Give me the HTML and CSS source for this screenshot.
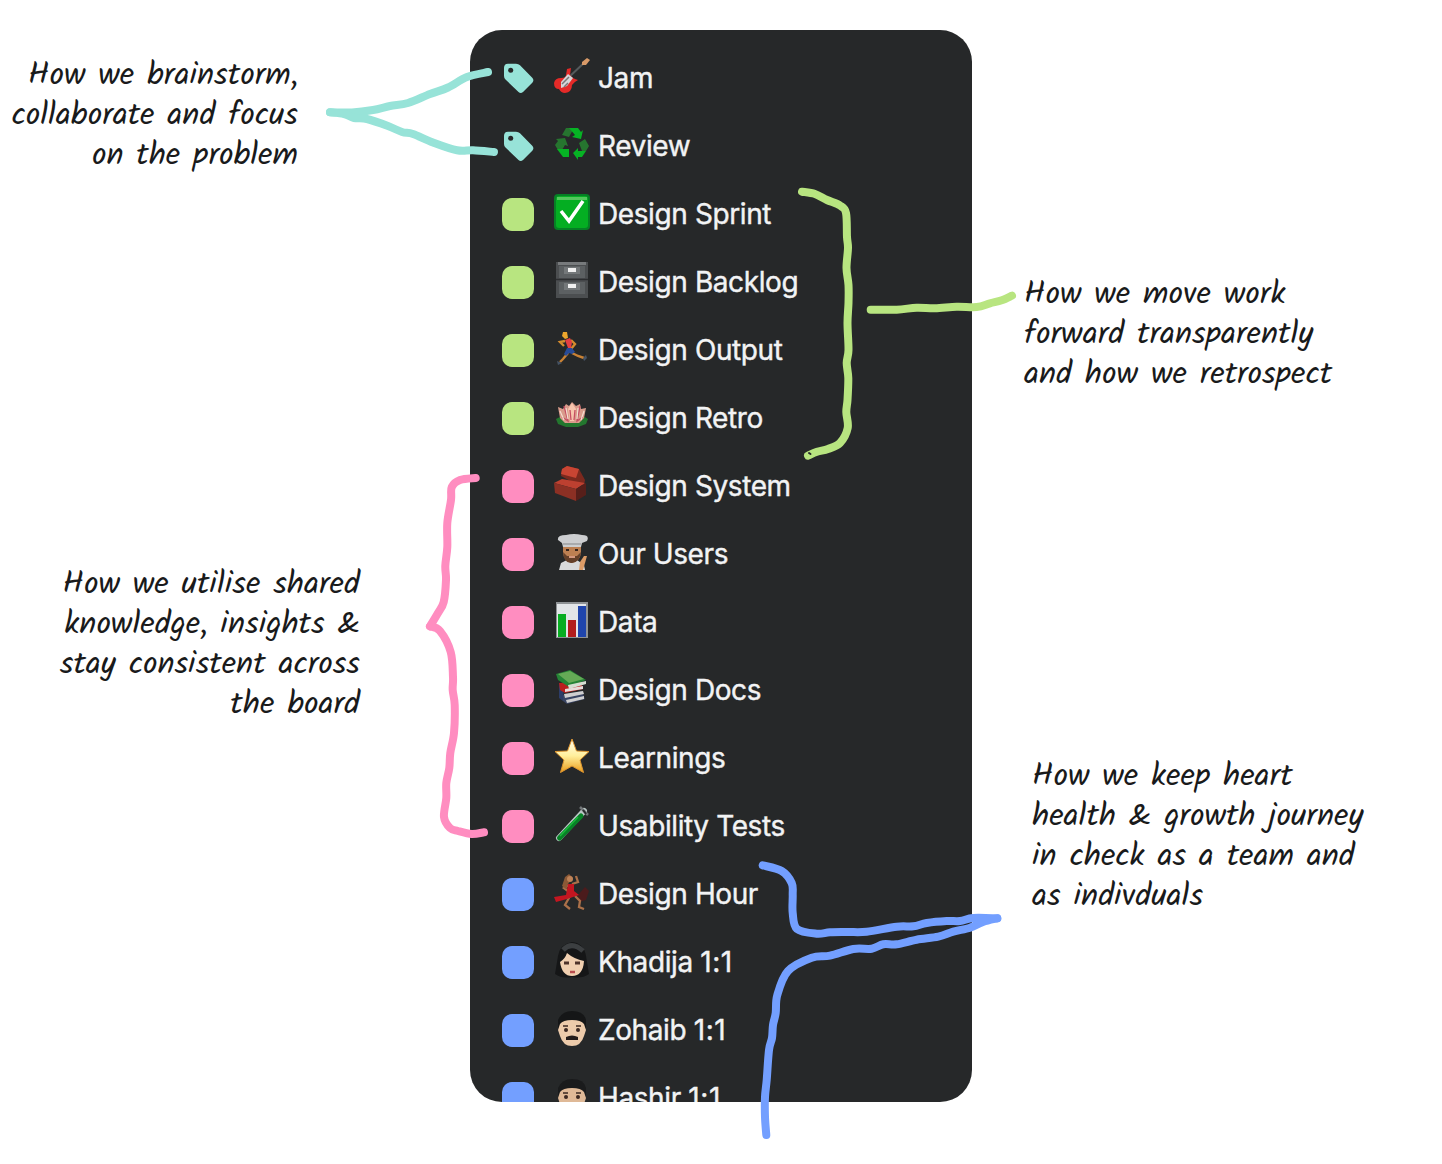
FILE: index.html
```
<!DOCTYPE html>
<html lang="en">

<head>
    <meta charset="utf-8" />
    <meta name="viewport" content="width=device-width,initial-scale=1.0" />
    <title>Design team channels</title>
    <link rel="stylesheet" href="styles.css">
</head>

<body>
    <div class="board">
        <div class="notes notes-left">
            <p class="note note-focus">
                <span>How we brainstorm,</span>
                <span>collaborate and focus</span>
                <span>on the problem</span>
            </p>
            <p class="note note-knowledge">
                <span>How we utilise shared</span>
                <span>knowledge, insights &amp;</span>
                <span>stay consistent across</span>
                <span>the board</span>
            </p>
        </div>

        <ul class="panel">
            <li class="row">
                <svg class="tag" viewBox="0 0 32 32"><path d="M2 6Q2 1.700 6 1.700H14Q16.500 1.700 18 3.300L30.500 16Q32.300 18.300 30.500 20.500L21 30Q18.700 32 16.500 30L3.500 17.500Q2 16 2 14Z"/><circle cx="8.700" cy="8.300" r="2.500"/></svg>
                <svg class="emoji" viewBox="0 0 36 36"><path d="M14 20L31 4" stroke="#555a5c" stroke-width="2"/><path d="M28 4L33 0L36 2L32 7L28 7Z" fill="#d89a68"/><path d="M13 11L17 10L16 17Q19 21 24 22Q20 24 18 27Q18 34 11 35Q7 35 5 31Q0 31 0 25Q1 20 7 20Q12 20 12 17Z" fill="#e52a28"/><path d="M7 24L14 16L19 20L13 28L7 30Z" fill="#d5d6d8"/><path d="M8 26L15 19M10 29L14 25" stroke="#777" stroke-width="1.500"/></svg>
                <span>Jam</span>
            </li>
            <li class="row">
                <svg class="tag" viewBox="0 0 32 32"><path d="M2 6Q2 1.700 6 1.700H14Q16.500 1.700 18 3.300L30.500 16Q32.300 18.300 30.500 20.500L21 30Q18.700 32 16.500 30L3.500 17.500Q2 16 2 14Z"/><circle cx="8.700" cy="8.300" r="2.500"/></svg>
                <svg class="emoji" viewBox="0 0 36 36"><path d="M8 9L12 2H20L15 11ZM1 19L4 15L2 13L11 12L14 20L11 19L8 24H4ZM25 17L31 13L35 20L32 25H28Z" fill="#26752f"/><path d="M15 2H24L27 6L29 4L27 13L18 11L21 9ZM3 23H15V31H9ZM19 27L24 22V25H32L28 31H24V34Z" fill="#06b324"/></svg>
                <span>Review</span>
            </li>
            <li class="row">
                <i class="swatch green"></i>
                <svg class="emoji" viewBox="0 0 36 36"><rect width="36" height="36" rx="4" fill="#067f25"/><rect x="2" y="2" width="32" height="32" rx="3" fill="#04ae22"/><path d="M3 3H33V6H3Z" fill="#55c75e"/><path d="M7 17L15 27L29 7" fill="none" stroke="#fff" stroke-width="3.500"/></svg>
                <span>Design Sprint</span>
            </li>
            <li class="row">
                <i class="swatch green"></i>
                <svg class="emoji" viewBox="0 0 36 36"><path d="M2 0H34V36H2Z" fill="#4b4e50"/><path d="M4 0H32V3H4Z" fill="#777a7c"/><path d="M5 4H31V16H5ZM5 20H31V32H5Z" fill="#5c6062"/><path d="M2 17.500H34" stroke="#2c2e30" stroke-width="1.500"/><path d="M10 5H26V12H10ZM10 21H26V28H10Z" fill="#74787a"/><path d="M14 6H22V10H14ZM14 22H22V26H14Z" fill="#f0f0f0"/></svg>
                <span>Design Backlog</span>
            </li>
            <li class="row">
                <i class="swatch green"></i>
                <svg class="emoji" viewBox="0 0 36 36"><g fill="none" stroke-width="2.400"><path d="M11 11L6 12L10 16M17 10L21 14L17 19" stroke="#d58c2e"/><path d="M14 23L9 29L6 32M18 23L24 26L30 28" stroke="#c98235"/></g><path d="M9 2H13L14 8L11 9L8 6Z" fill="#eca62d"/><path d="M11 10L16 8L18 12L17 18L14 18Z" fill="#e53f43"/><path d="M13 18H18L21 22L18 24L15 23L12 26L10 24Z" fill="#274b98"/><path d="M3 31L8 33L4 35ZM29 28L32 25L33 28L30 31Z" fill="#465365"/></svg>
                <span>Design Output</span>
            </li>
            <li class="row">
                <i class="swatch green"></i>
                <svg class="emoji" viewBox="0 0 36 36"><path d="M2 21L8 18H29L34 21L32 26L24 29H12L4 26Z" fill="#23762e"/><path d="M4 9L9 11L12 6L15 8L18 4L22 8L26 6L27 11L32 10L30 20L25 25H11L6 20Z" fill="#d99b8b"/><path d="M18 5L22 11L20 23H16L14 11Z" fill="#f7c5ad"/><path d="M10 8L14 23L8 19M26 8L23 23L29 19M16 12L17 22M21 12L20 22" fill="none" stroke="#c64e63" stroke-width="1.300"/><path d="M6 13L10 22M12 10L14 21M30 13L27 22M24 10L23 21" stroke="#f4ded1" stroke-width="1.200"/></svg>
                <span>Design Retro</span>
            </li>
            <li class="row">
                <i class="swatch pink"></i>
                <svg class="emoji" viewBox="0 0 36 36"><path d="M8 3L13 0L25 3L31 14L30 19L20 17L7 10Z" fill="#7c291e"/><path d="M8 3L13 0L25 3L22 12L7 8Z" fill="#c94533"/><path d="M0 17L8 13L31 17L22 23Z" fill="#bd4030"/><path d="M0 17L22 23V35L1 27Z" fill="#8c3024"/><path d="M22 23L32 17V29L22 35Z" fill="#571f1a"/></svg>
                <span>Design System</span>
            </li>
            <li class="row">
                <i class="swatch pink"></i>
                <svg class="emoji" viewBox="0 0 36 36"><path d="M5 36L7 29L13 26H23L30 31L31 36Z" fill="#d9dadb"/><path d="M9 10H27V19Q26 27 18 29Q10 27 9 19Z" fill="#bd8052"/><path d="M9 18Q10 30 18 29Q26 28 27 18L23 22H13Z" fill="#654029"/><path d="M4 6Q3 1 12 1Q20-1 28 1Q36 1 33 7L28 9L27 13H9L8 9Z" fill="#cdced0"/><path d="M9 10H27" stroke="#858789"/><path d="M12 16H15M21 16H24" stroke="#35241c" stroke-width="2"/><path d="M15 23H21" stroke="#d5997f" stroke-width="2"/><path d="M26 28L30 22L33 22L31 29L29 36H25Z" fill="#dc9c67"/></svg>
                <span>Our Users</span>
            </li>
            <li class="row">
                <i class="swatch pink"></i>
                <svg class="emoji" viewBox="0 0 36 36"><path d="M2 0H34V36H2Z" fill="#8e9295"/><path d="M3 2H32V35H3Z" fill="#e2e5e8"/><path d="M4 12H12V35H4Z" fill="#08ad22"/><path d="M14 18H22V35H14Z" fill="#b21d1d"/><path d="M24 4H32V35H24Z" fill="#1f45ac"/></svg>
                <span>Data</span>
            </li>
            <li class="row">
                <i class="swatch pink"></i>
                <svg class="emoji" viewBox="0 0 36 36"><path d="M5 13L10 16L9 31L5 28Z" fill="#2d3d68"/><path d="M9 25L28 21L31 29L13 34L9 31Z" fill="#394463"/><path d="M10 24L29 21L30 24L11 28ZM12 30L30 26V29L13 33Z" fill="#cfcfd0"/><path d="M5 13L27 12L29 19L11 23L6 20Z" fill="#ba1f1e"/><path d="M11 19L29 16V19L11 22Z" fill="#e8dcda"/><path d="M2 4L16 0L32 10L15 17L4 10Z" fill="#258436"/><path d="M4 4L16 1L30 9L15 13Z" fill="#65aa56"/><path d="M14 15L32 11V14L15 19Z" fill="#d6ded2"/></svg>
                <span>Design Docs</span>
            </li>
            <li class="row">
                <i class="swatch pink"></i>
                <svg class="emoji" viewBox="0 0 36 36"><defs><linearGradient id="gold" x2="0" y2="1"><stop stop-color="#fffdf0"/><stop offset=".5" stop-color="#ffef9c"/><stop offset="1" stop-color="#eb9d1b"/></linearGradient></defs><path d="M18 1L22.500 13L35 13.500L26 22L29.500 34.500L18 28L6.500 34.500L10 22L1 13.500L13.500 13Z" fill="url(#gold)" stroke="#df962f"/></svg>
                <span>Learnings</span>
            </li>
            <li class="row">
                <i class="swatch pink"></i>
                <svg class="emoji" viewBox="0 0 36 36"><path d="M5 32L30 5" stroke="#b9c6c4" stroke-width="6" stroke-linecap="round"/><path d="M5.500 32L27 10" stroke="#078226" stroke-width="5" stroke-linecap="round"/><path d="M6 30L24 11" stroke="#18ba3a" stroke-width="1.500"/><path d="M26 1L34 9" stroke="#737779" stroke-width="2.500"/><path d="M29 4L32 8" stroke="#292b2c" stroke-width="2"/></svg>
                <span>Usability Tests</span>
            </li>
            <li class="row">
                <i class="swatch blue"></i>
                <svg class="emoji" viewBox="0 0 36 36"><path d="M24 21L31 13L35 17L32 26L25 28Z" fill="#4b1b1c"/><path d="M18 10L24 8L22 2M15 11L10 14L14 17M16 22L11 31L16 35M21 22L26 27L25 33L30 35" fill="none" stroke="#aa7049" stroke-width="2.300"/><path d="M11 3L15 0L19 4L14 10L12 15L8 12Z" fill="#8b5936"/><circle cx="16" cy="5" r="3" fill="#be8358"/><path d="M14 10L20 10L20 17L25 21L19 23L13 25L2 28L0 23L12 21Z" fill="#c41620"/></svg>
                <span>Design Hour</span>
            </li>
            <li class="row">
                <i class="swatch blue"></i>
                <svg class="emoji" viewBox="0 0 36 36"><path d="M18 0Q30 1 32 14L35 32Q28 37 18 35Q8 37 1 32L4 14Q6 2 18 0Z" fill="#151617"/><path d="M9 8Q18-1 29 9" fill="none" stroke="#3c3f41" stroke-width="5"/><path d="M6 20Q11 17 13 11Q20 17 30 19Q29 34 18 34Q8 34 6 20Z" fill="#f0cfb0"/><path d="M10 21H15M21 21H26" stroke="#4e332a" stroke-width="3"/><path d="M16 30H21" stroke="#b94c4e" stroke-width="2.500"/></svg>
                <span>Khadija <span class="ratio">1:1</span></span>
            </li>
            <li class="row">
                <i class="swatch blue"></i>
                <svg class="emoji" viewBox="0 0 36 36"><path d="M4 20L4 10Q8 1 18 1Q30 1 32 10L32 20Z" fill="#151617"/><path d="M6 14Q9 10 18 10Q27 10 30 14L32 20L30 26Q27 36 18 36Q9 36 6 26L4 20Z" fill="#edcbab"/><path d="M9 16H14M22 16H27" stroke="#3b2822" stroke-width="1.500"/><circle cx="12" cy="20" r="2" fill="#3b2822"/><circle cx="24" cy="20" r="2" fill="#3b2822"/><path d="M12 27Q18 24 24 27V30H12Z" fill="#241b19"/></svg>
                <span>Zohaib <span class="ratio">1:1</span></span>
            </li>
            <li class="row">
                <i class="swatch blue"></i>
                <svg class="emoji" viewBox="0 0 36 36"><path d="M4 20L4 10Q8 1 18 1Q30 1 32 10L32 20Z" fill="#1a1b1c"/><path d="M6 14Q9 10 18 10Q27 10 30 14L32 20L30 26Q27 36 18 36Q9 36 6 26L4 20Z" fill="#dfb997"/><path d="M9 15H14M22 15H27" stroke="#3b2822" stroke-width="1.500"/><circle cx="12" cy="19" r="2" fill="#3b2822"/><circle cx="24" cy="19" r="2" fill="#3b2822"/></svg>
                <span>Hashir <span class="ratio">1:1</span></span>
            </li>
        </ul>

        <div class="notes notes-right">
            <p class="note note-work">
                <span>How we move work</span>
                <span>forward transparently</span>
                <span>and how we retrospect</span>
            </p>
            <p class="note note-growth">
                <span>How we keep heart</span>
                <span>health &amp; growth journey</span>
                <span>in check as a team and</span>
                <span>as indivduals</span>
            </p>
        </div>

        <svg class="strokes" viewBox="0 0 1442 1164">
            <g class="ink-teal">
                <path data-points="330,112.300 352,112.500 373,110 390,106 408,103 430,94 448,87.500 467,77 488,72"/>
                <path data-points="330,112.300 344,114 354,118 367,119 388,126 402,132 413,134 433,142.500 457,150.300 473,150.300 494,152"/>
            </g>
            <g class="ink-green">
                <path data-points="802,191.700 815,194 827,200 840,205.500 846,213 847,237 848,248 846.500,268 848.500,285 848.500,303 847.500,323 848.500,350 846.700,363 848.300,378 847.500,400 846.300,412 847.700,428 840,443 828,449 817,451.700 808,455.700"/>
                <path data-points="870.700,309.700 896.700,309.700 916.700,307.700 935,308.300 956.700,306.700 976.700,307 990,303.300 1001.700,300.300 1012,295.700"/>
            </g>
            <path class="ink-dot" d="M809 453L810.500 454"/>
            <g class="ink-pink">
                <path data-points="475.700,478 460,480 451.800,487 451,500 447.300,523 447.300,547 445.300,566 446,580 443.700,602 438,613 430,626.300"/>
                <path data-points="430,626.300 440,631 450.700,652 453,677 452.700,690 454.700,705 454,733 450.300,753 449.300,768 446.300,783 446.300,798 444,817 450,828 458,831 471.700,834 484,832.300"/>
            </g>
            <g class="ink-blue">
                <path data-points="762.700,865.300 781.700,871 791.700,883 792.700,895 792.700,913 797,929 816.700,933.700 830,932.300 848,932 866.700,931.700 896.700,926.700 913.300,926.300 926.700,923 946.700,921 960,921 973.300,918 997.300,918.300"/>
                <path data-points="997.300,918.300 983,922 970,927.700 953.300,931.700 938.300,936.700 916.700,939.700 896.700,944.300 883.300,944.300 871.700,948.700 853.300,949 830,955.700 811.700,957.700 788,971 777.300,995 775.700,1013 773,1025 772,1038 769,1050 766.700,1080 765,1097 765,1117 766.300,1135"/>
            </g>
        </svg>
    </div>
    <script src="script.js"></script>
</body>

</html>
```

FILE: styles.css
```
* {
    box-sizing: border-box;
}

body {
    margin: 0;
    background: #fff;
}

.board {
    position: relative;
    display: grid;
    grid-template-columns: 470px 502px 470px;
    width: 1442px;
    height: 1164px;
    overflow: hidden;
}

.panel {
    height: 1072px;
    margin: 30px 0 0;
    padding: 14px 32px 0;
    overflow: hidden;
    list-style: none;
    background: #262829;
    border-radius: 32px;
}

.row {
    display: flex;
    align-items: center;
    height: 68px;
    color: #f2f3f4;
    font: 400 28px/34px Inter, "Liberation Sans", sans-serif;
    letter-spacing: -0.4px;
    -webkit-text-stroke: 0.4px #f2f3f4;
    white-space: nowrap;
}

.ratio {
    letter-spacing: 0.6px;
}

.tag,
.swatch {
    flex: none;
    width: 32px;
    height: 32px;
    margin-right: 20px;
}

.swatch {
    height: 33px;
    border-radius: 10px;
}

.tag {
    fill: #97e3d8;
}

.tag circle {
    fill: #262829;
}

.green {
    background: #b8e580;
}

.pink {
    background: #ff8dc0;
}

.blue {
    background: #739fff;
}

.emoji {
    flex: none;
    width: 36px;
    height: 36px;
    margin: 0 8px 4px 0;
}

.notes {
    display: flex;
    flex-direction: column;
}

.notes-left {
    padding-top: 56px;
    align-items: flex-end;
    text-align: right;
}

.notes-right {
    padding-top: 275px;
    align-items: flex-start;
}

.note {
    margin: 0;
    color: #191a1b;
    font: 400 32px/40px Kalam, Lato, sans-serif;
    white-space: nowrap;
}

.note span {
    display: block;
}

.note-focus {
    margin-right: 172px;
}

.note-knowledge {
    margin: 389px 110px 0 0;
}

.note-work {
    margin-left: 52px;
}

.note-growth {
    margin: 362px 0 0 60px;
}

.strokes {
    position: absolute;
    top: 0;
    left: 0;
    width: 1442px;
    height: 1164px;
    fill: none;
    stroke-width: 8;
    stroke-linecap: round;
    stroke-linejoin: round;
}

.ink-teal {
    stroke: #97e3d8;
}

.ink-green {
    stroke: #b8e580;
}

.ink-pink {
    stroke: #ff8dc0;
}

.ink-blue {
    stroke: #739fff;
}

.ink-dot {
    stroke: #262829;
    stroke-width: 2;
}
```

FILE: script.js
```
// smooth curve through all the points of a stroke
function curve(points) {
    let d = `M${points[0]}`
    for (let i = 0; i < points.length - 1; i++) {
        const p0 = points[i - 1] || points[i]
        const p1 = points[i]
        const p2 = points[i + 1]
        const p3 = points[i + 2] || p2
        const c1 = [p1[0] + (p2[0] - p0[0]) / 6, p1[1] + (p2[1] - p0[1]) / 6]
        const c2 = [p2[0] - (p3[0] - p1[0]) / 6, p2[1] - (p3[1] - p1[1]) / 6]
        d += `C${c1} ${c2} ${p2}`
    }
    return d
}

document.querySelectorAll('[data-points]').forEach(path => {
    const points = path.dataset.points.split(' ').map(p => p.split(',').map(Number))
    path.setAttribute('d', curve(points))
})
```
